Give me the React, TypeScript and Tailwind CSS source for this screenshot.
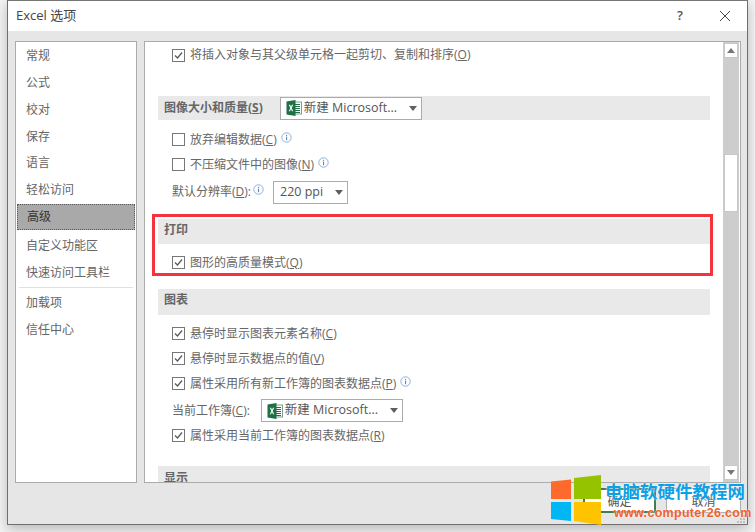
import React from 'react';

const font = { sans: "font-['Open_Sans','Noto_Sans_CJK_SC',sans-serif]" };

const sideItems = ['常规', '公式', '校对', '保存'];

const InfoIcon = ({ className }: { className?: string }) => (
  <svg width="11" height="11" viewBox="0 0 11 11" className={`shrink-0 -mt-[5px] ${className ?? 'ml-[4px]'}`}>
    <circle cx="5.5" cy="5.5" r="4.7" fill="#fff" stroke="#8fb0dc" strokeWidth="1" />
    <rect x="5" y="4.6" width="1.1" height="3.6" fill="#5b86c0" />
    <rect x="5" y="2.8" width="1.1" height="1.1" fill="#5b86c0" />
  </svg>
);

const ExcelIcon = () => (
  <svg width="16" height="16" viewBox="0 0 16 16" className="shrink-0">
    <rect x="6" y="2" width="9.5" height="12" fill="#fff" stroke="#7f9f8e" strokeWidth="1" />
    <path d="M9 4.5h5M9 6.5h5M9 8.5h5M9 10.5h5M9 12.5h5" stroke="#1e7145" strokeWidth="1" />
    <path d="M0.5 1.5L9.5 0V16L0.5 14.5Z" fill="#1e7145" />
    <path d="M2.8 4.8L4.1 4.8L5 6.8L6 4.8L7.2 4.8L5.7 8L7.2 11.2L6 11.2L5 9.1L4 11.2L2.8 11.2L4.3 8Z" fill="#fff" />
  </svg>
);

const Caret = () => (
  <svg width="8" height="5" viewBox="0 0 8 5" className="shrink-0">
    <path d="M0 0H8L4 5Z" fill="#5f5f5f" />
  </svg>
);

const Checkbox = ({ checked }: { checked?: boolean }) => (
  <span className="w-[13px] h-[13px] border border-[#777] bg-white shrink-0 flex items-center justify-center">
    {checked && (
      <svg width="11" height="11" viewBox="0 0 11 11">
        <path d="M2 5.5L4.5 8L9 2.5" fill="none" stroke="#5a5a5a" strokeWidth="1.3" />
      </svg>
    )}
  </span>
);

const Label = ({ text, hot, suffix }: { text: string; hot: string; suffix?: string }) => (
  <span className="whitespace-nowrap">
    {text}(<span className="underline">{hot}</span>){suffix}
  </span>
);

const CheckRow = ({ text, hot, checked, info, className }: { text: string; hot: string; checked?: boolean; info?: boolean; className?: string }) => (
  <div className={`h-[25px] pl-[27px] flex items-center gap-[5px] ${className ?? ''}`}>
    <Checkbox checked={checked} />
    <span className="flex items-center">
      <Label text={text} hot={hot} />
      {info && <InfoIcon />}
    </span>
  </div>
);

const SectionHead = ({ children, className }: { children: React.ReactNode; className?: string }) => (
  <div className={`mx-[13px] pl-[6px] bg-[#e9e9e9] flex items-center font-bold text-[#666] ${className ?? ''}`}>
    {children}
  </div>
);

const WorkbookSelect = ({ className }: { className?: string }) => (
  <div className={`h-[23px] w-[142px] border border-[#ababab] bg-white flex items-center pl-[5px] pr-[4px] gap-[2px] text-[12.5px] font-normal text-[#555] ${className ?? ''}`}>
    <ExcelIcon />
    <span className="flex-1 whitespace-nowrap">新建 Microsoft...</span>
    <Caret />
  </div>
);

const ScrollBtn = ({ up }: { up?: boolean }) => (
  <div className="h-[15px] mx-[1px] bg-white border border-[#c8c8c8] flex items-center justify-center">
    <svg width="8" height="5" viewBox="0 0 8 5">
      <path d={up ? 'M0 5H8L4 0Z' : 'M0 0H8L4 5Z'} fill="#777" />
    </svg>
  </div>
);

export default function App() {
  return (
    <div className={`relative w-[755px] h-[532px] overflow-hidden bg-[#f4f4f4] text-[12px] text-[#666] ${font.sans}`}>
      {/* dialog */}
      <div className="ml-[7px] w-[741px] h-[525px] border border-[#6e6e6e] border-t-0 bg-[#e6e6e6] flex flex-col shadow-[0_4px_12px_rgba(0,0,0,0.25)]">
        <div className="h-[31px] bg-white border-t border-[#777] flex items-center shrink-0">
          <span className="pl-[8px] text-[13px] text-[#444] flex-1">Excel 选项</span>
          <span className="w-[24px] text-center text-[13px] font-semibold text-[#555] mr-[27px]">?</span>
          <svg width="12" height="12" viewBox="0 0 12 12" className="mr-[16px]">
            <path d="M1 1L11 11M11 1L1 11" stroke="#444" strokeWidth="1" fill="none" />
          </svg>
        </div>

        <div className="h-[442px] mt-[10px] ml-[7px] mr-[6px] flex gap-[7px] shrink-0">
          {/* left nav */}
          <div className="w-[122px] border border-[#ababab] bg-white px-[1px] text-[#666] shrink-0">
            {sideItems.map((item) => (
              <div key={item} className="h-[27px] pl-[9px] flex items-center">{item}</div>
            ))}
            <div className="h-[26px] pl-[9px] flex items-center">语言</div>
            <div className="h-[27px] pl-[9px] flex items-center">轻松访问</div>
            <div className="h-[26px] mt-[1px] pl-[9px] flex items-center bg-[#a9a9a9] border border-dotted border-[#555] text-[#333]">高级</div>
            <div className="h-[27px] pl-[9px] flex items-center mt-[2px]">自定义功能区</div>
            <div className="h-[27px] pl-[9px] flex items-center">快速访问工具栏</div>
            <div className="h-px mx-[2px] my-[1px] bg-[#e0e0e0]" />
            <div className="h-[27px] pl-[9px] flex items-center">加载项</div>
            <div className="h-[27px] pl-[9px] flex items-center">信任中心</div>
          </div>

          {/* settings pane */}
          <div className="flex-1 border border-[#ababab] bg-white flex overflow-hidden">
            <div className="flex-1 min-w-0 overflow-hidden">
              <CheckRow className="h-[26px]" checked text="将插入对象与其父级单元格一起剪切、复制和排序" hot="O" />
              <SectionHead className="mt-[28px] h-[24px]">
                <Label text="图像大小和质量" hot="S" />
                <WorkbookSelect className="ml-[17px]" />
              </SectionHead>
              <CheckRow className="mt-[7px]" text="放弃编辑数据" hot="C" info />
              <CheckRow text="不压缩文件中的图像" hot="N" info />
              <div className="mt-[3px] h-[24px] pl-[27px] flex items-center">
                <Label text="默认分辨率" hot="D" suffix=":" />
                <InfoIcon className="ml-[2px]" />
                <div className="ml-[9px] h-[23px] w-[75px] border border-[#ababab] flex items-center pl-[6px] pr-[4px] text-[12.5px] text-[#555]">
                  <span className="flex-1">220 ppi</span>
                  <Caret />
                </div>
              </div>
              <SectionHead className="mt-[15px] h-[25px] pb-[3px]">打印</SectionHead>
              <CheckRow className="mt-[6px]" checked text="图形的高质量模式" hot="Q" />
              <SectionHead className="mt-[14px] h-[26px] pb-[4px]">图表</SectionHead>
              <CheckRow className="mt-[6px]" checked text="悬停时显示图表元素名称" hot="C" />
              <CheckRow checked text="悬停时显示数据点的值" hot="V" />
              <CheckRow checked text="属性采用所有新工作簿的图表数据点" hot="P" info />
              <div className="mt-[3px] h-[23px] pl-[27px] flex items-center">
                <span className="pt-[1px]">
                  <Label text="当前工作簿" hot="C" suffix=":" />
                </span>
                <WorkbookSelect className="ml-[11px]" />
              </div>
              <CheckRow className="mt-[1px]" checked text="属性采用当前工作簿的图表数据点" hot="R" />
              <SectionHead className="mt-[18px] h-[26px] pb-[2px]">显示</SectionHead>
            </div>

            {/* scrollbar */}
            <div className="w-[16px] mr-[1px] bg-[#cdcdcd] flex flex-col pt-[1px] pb-[2px] shrink-0">
              <ScrollBtn up />
              <div className="h-[58px] mt-[96px] mx-[1px] bg-white border border-[#c8c8c8]" />
              <div className="flex-1" />
              <ScrollBtn />
            </div>
          </div>
        </div>

        {/* footer buttons */}
        <div className="flex justify-end gap-[10px] mt-[5px] mr-[6px]">
          <div className="w-[73px] h-[25px] pt-[3px] bg-white border-2 border-[#3f7d58] flex items-center justify-center text-[#555]">确定</div>
          <div className="w-[75px] h-[25px] pt-[3px] bg-white border border-[#ababab] flex items-center justify-center text-[#555]">取消</div>
        </div>
      </div>

      {/* red highlight drawn over the print section */}
      <div className="absolute left-[152px] top-[214px] w-[561px] h-[62px] border-[3px] border-[#f5333f]" />

      {/* resize grip */}
      <svg width="9" height="9" viewBox="0 0 9 9" className="absolute left-[737px] top-[515px]">
        <path d="M6 0h2v2H6zM3 3h2v2H3zM6 3h2v2H6zM0 6h2v2H0zM3 6h2v2H3zM6 6h2v2H6z" fill="#bdbdbd" />
      </svg>

      {/* watermark */}
      <div className="absolute left-[551px] top-[475px] flex items-start">
        <svg width="50" height="50" viewBox="0 0 50 50" className="shrink-0">
          <path d="M0 6.5L20 4.5V24H0Z" fill="#ff6a2c" />
          <path d="M23 3L50 0V24H23Z" fill="#95c300" />
          <path d="M0 27H20V46L0 44Z" fill="#00b7f4" />
          <path d="M23 27H50V50L23 46Z" fill="#ffc300" />
        </svg>
        <div className="ml-[4px] mt-[6px] font-['Liberation_Sans','Noto_Sans_CJK_SC',sans-serif] font-bold whitespace-nowrap">
          <div className="text-[17.5px] leading-[22px] text-[#0ea0e6] [text-shadow:0_0_2px_#fff]">电脑软硬件教程网</div>
          <div className="ml-[9px] mt-[3px] text-[12.5px] leading-[14px] tracking-[0.3px] text-[#f0622a] [text-shadow:0_0_2px_#fff]">www.computer26.com</div>
        </div>
      </div>
    </div>
  );
}
